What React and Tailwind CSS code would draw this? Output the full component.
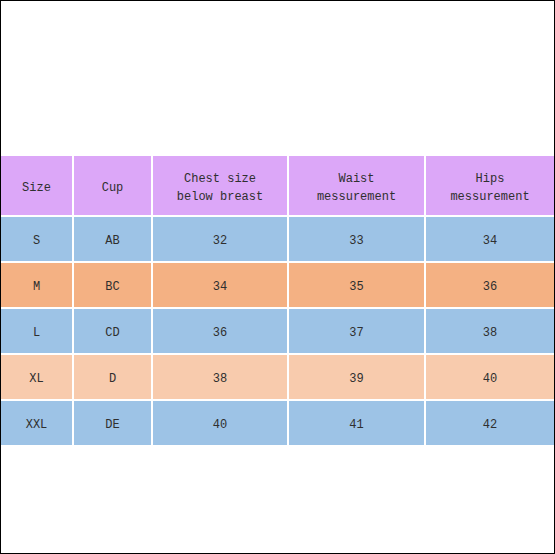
const header = ['Size', 'Cup', 'Chest size\nbelow breast', 'Waist\nmessurement', 'Hips\nmessurement']

const rows = [
  { cells: ['S', 'AB', '32', '33', '34'], bg: 'bg-[#9dc3e6]' },
  { cells: ['M', 'BC', '34', '35', '36'], bg: 'bg-[#f4b183]' },
  { cells: ['L', 'CD', '36', '37', '38'], bg: 'bg-[#9dc3e6]' },
  { cells: ['XL', 'D', '38', '39', '40'], bg: 'bg-[#f8cbad]' },
  { cells: ['XXL', 'DE', '40', '41', '42'], bg: 'bg-[#9dc3e6]' },
]

export default function App() {
  return (
    <div
      className="w-[555px] h-[554px] border border-black bg-white pt-[155px] text-[12px] text-[#2f2f2f]"
      style={{ fontFamily: '"Liberation Mono", "DejaVu Sans Mono", monospace' }}
    >
      <div className="grid grid-cols-[71px_77px_134px_135px_128px] auto-rows-[44px] grid-rows-[59px] gap-[2px]">
        {header.map((h) => (
          <div
            key={h}
            className="bg-[#dca7f8] flex items-center justify-center text-center whitespace-pre-line leading-[18px] pt-[5px]"
          >
            {h}
          </div>
        ))}
        {rows.map((r) =>
          r.cells.map((c, i) => (
            <div key={r.cells[0] + i} className={`${r.bg} flex items-center justify-center pt-[4px]`}>
              {c}
            </div>
          ))
        )}
      </div>
    </div>
  )
}
